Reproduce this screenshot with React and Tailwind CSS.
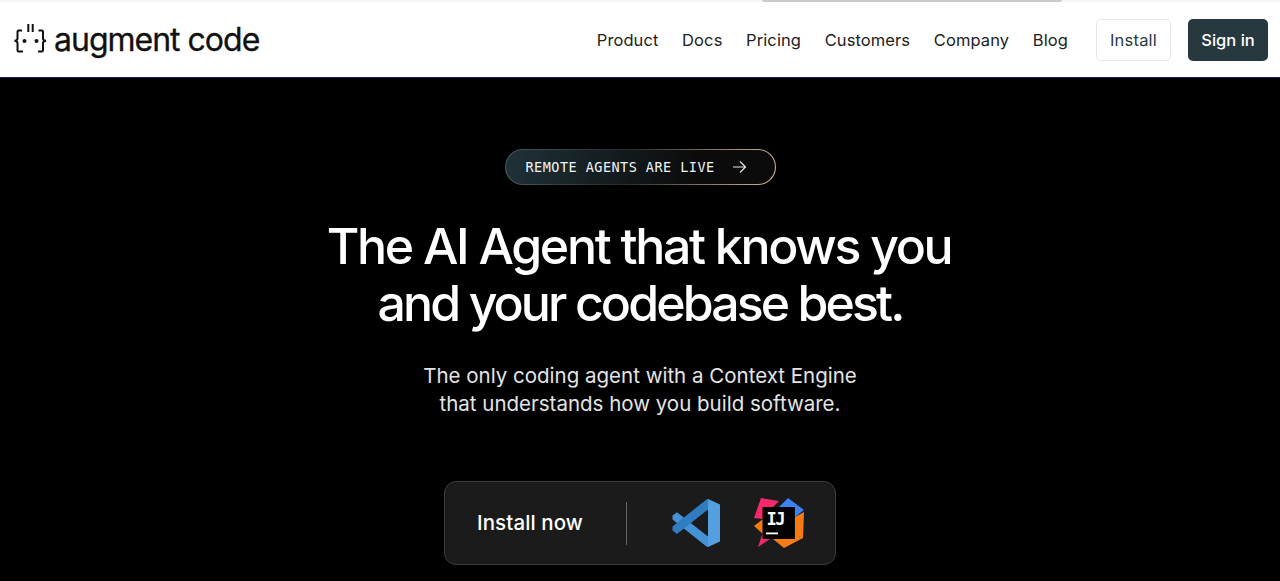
import React from "react";

const Logo = () => (
  <svg width="35" height="32" viewBox="0 0 35 32" fill="none" stroke="#111" strokeWidth="2" className="shrink-0">
    <path d="M9 6.5H5.6C4.8 6.5 4.5 7 4.5 7.8V14.5C4.5 15.9 3.7 16.6 1.5 16.8C3.7 17 4.5 17.7 4.5 19.1V26.2C4.5 27 4.8 27.5 5.6 27.5H10" />
    <path d="M25.5 6.5H28.9C29.7 6.5 30 7 30 7.8V14.5C30 15.9 30.8 16.6 33 16.8C30.8 17 30 17.7 30 19.1V26.2C30 27 29.7 27.5 28.9 27.5H25" />
    <path d="M15.3 0V8M19.7 0V8" />
    <circle cx="11.5" cy="17" r="2" fill="#111" stroke="none" />
    <circle cx="23.5" cy="17" r="2" fill="#111" stroke="none" />
  </svg>
);

const VSCode = () => (
  <svg width="50" height="50" viewBox="0 0 50 50">
    <path d="M1.5 17.5 6 14.2 37 38.5V49L35.5 48.5 1.5 21.5Z" fill="#4393d6" />
    <path d="M1.5 32.5 6 36 37 11.5V1L35.5 1.5 1.5 28.5Z" fill="#2f7cbf" />
    <path d="M37 1 49 6.5V43.5L37 49Z" fill="#539fdf" />
  </svg>
);

const IntelliJ = () => (
  <svg width="52" height="52" viewBox="0 0 52 52">
    <path d="M10 22 1 29 10 37Z" fill="#f97a12" />
    <path d="M51 15 50 41 31 51 20 42H42V20Z" fill="#f97a12" />
    <path d="M35 1 51 13 42 20V10H26Z" fill="#3b82f6" />
    <path d="M8 1 26 4 20 10H10V22L1 21Z" fill="#f5296b" />
    <path d="M10 35 5 50 17 42H10Z" fill="#f5296b" />
    <rect x="9.5" y="10" width="32" height="32" fill="#000" />
    <text x="13.5" y="27.5" fill="#fff" letterSpacing="-1.5" style={{ fontFamily: '"DejaVu Sans Mono", monospace', fontSize: 17, fontWeight: 700 }}>IJ</text>
    <rect x="13" y="35.5" width="12" height="1.8" fill="#fff" />
  </svg>
);

const links = ["Product", "Docs", "Pricing", "Customers", "Company", "Blog"];

export default function App() {
  return (
    <div className="h-[581px] overflow-hidden bg-black font-['Inter',sans-serif]">
      <div className="flex h-[2px] justify-center bg-[#f4f5f5] pl-[544px]">
        <div className="h-[2px] w-[300px] rounded-b-lg bg-[#c9cccb]" />
      </div>
      <header className="flex h-[75px] items-center justify-between bg-white pl-[13px] pr-[12px]">
        <div className="flex items-center gap-[6px]">
          <Logo />
          <span className="text-[32px] leading-none tracking-[-1px] text-[#111] [-webkit-text-stroke:0.3px_#111]">augment code</span>
        </div>
        <nav className="flex items-center">
          {links.map((l) => (
            <a key={l} className="mr-[23.6px] pt-px text-[16.5px] tracking-[0.1px] text-[#222]">{l}</a>
          ))}
          <button className="ml-[4.4px] h-[42px] w-[75px] rounded-[5px] border border-[#e6e8e8] pt-px text-[16.5px] tracking-[0.2px] text-[#2a3a40]">Install</button>
          <button className="ml-[17px] h-[42px] w-[80px] rounded-[5px] bg-[#27393f] pt-px text-[16.5px] font-medium text-white">Sign in</button>
        </nav>
      </header>
      <div className="h-px bg-[#1b1b66]" />
      <main className="flex flex-col items-center">
        <div className="mt-[71px] rounded-full bg-[linear-gradient(100deg,#4a5a5c,#2a2a2a_45%,#d8b893_100%)] p-px">
          <div className="flex h-[34px] w-[269px] items-center rounded-full bg-[linear-gradient(100deg,#1f3238,#0b0b0b_70%)] pl-[20px] font-['DejaVu_Sans_Mono',monospace] text-[13.5px] tracking-[0.47px] text-[#f2f5f5]">
            <span>REMOTE AGENTS ARE LIVE</span>
            <svg width="15" height="14" viewBox="0 0 15 14" fill="none" stroke="#e8e8e8" strokeWidth="1.2" className="ml-[17px]">
              <path d="M1 7H13.5M8 1.5 13.5 7 8 12.5" />
            </svg>
          </div>
        </div>
        <h1 className="mt-[33px] text-center text-[50px] font-medium leading-[57px] text-white">
          <span className="block -translate-x-px tracking-[-2.3px]">The AI Agent that knows you</span>
          <span className="block tracking-[-2.9px]">and your codebase best.</span>
        </h1>
        <p className="mt-[30px] text-center text-[20.5px] leading-[28px] text-[#e4e4e4]">
          The only coding agent with a Context Engine<br />that understands how you build software.
        </p>
        <div className="mt-[63px] flex h-[84px] w-[392px] items-center rounded-[12px] border border-[#3a3a3a] bg-[#1b1b1b]">
          <span className="ml-[32px] text-[20.5px] font-medium tracking-[0.1px] text-white">Install now</span>
          <div className="ml-[43.5px] h-[43px] w-px bg-[#666]" />
          <div className="ml-[44px]"><VSCode /></div>
          <div className="ml-[32px]"><IntelliJ /></div>
        </div>
      </main>
    </div>
  );
}
